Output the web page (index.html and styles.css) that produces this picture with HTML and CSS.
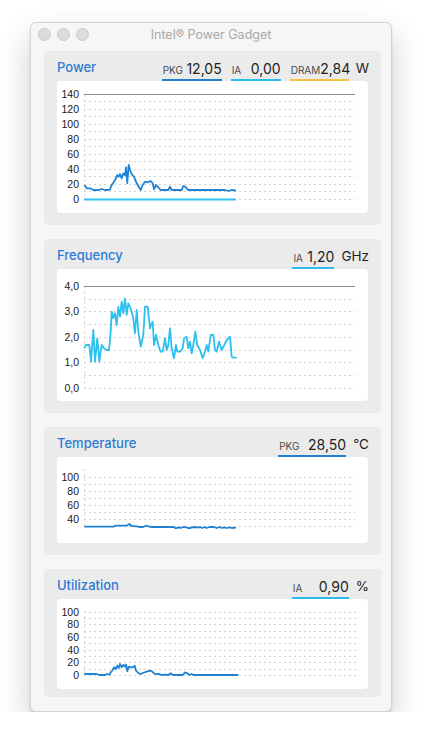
FILE: index.html
```html
<!DOCTYPE html>
<html lang="en">
<head>
    <meta charset="UTF-8">
    <title>Intel® Power Gadget</title>
    <link rel="stylesheet" href="styles.css">
</head>
<body>
<div class="window">
    <div class="titlebar">
        <div class="lights">
            <span class="light"></span>
            <span class="light"></span>
            <span class="light"></span>
        </div>
        <div class="title">Intel® Power Gadget</div>
        <div></div>
    </div>

    <div class="panels">
        <!-- Power -->
        <div class="panel">
            <div class="panel-head">
                <h3>Power</h3>
                <div class="readouts">
                    <div class="readout pkg w-60"><span class="lbl">PKG</span><span class="val">12,05</span></div>
                    <div class="readout ia w-50"><span class="lbl">IA</span><span class="val">0,00</span></div>
                    <div class="readout dram w-59"><span class="lbl">DRAM</span><span class="val">2,84</span></div>
                    <span class="unit">W</span>
                </div>
            </div>
            <div class="chart tall">
                <svg width="311" height="132">
                    <path class="grid" d="M27.5 13.5V118.5 M27 20.5H298 M27 28.5H298 M27 35.5H298 M27 43.5H298 M27 50.5H298 M27 58.5H298 M27 65.5H298 M27 73.5H298 M27 80.5H298 M27 88.5H298 M27 95.5H298 M27 103.5H298 M27 110.5H298 M27 118.5H298"/>
                    <path class="max" d="M27 13.5H298"/>
                    <text x="22" y="17">140</text>
                    <text x="22" y="32">120</text>
                    <text x="22" y="47">100</text>
                    <text x="22" y="62">80</text>
                    <text x="22" y="77">60</text>
                    <text x="22" y="92">40</text>
                    <text x="22" y="107">20</text>
                    <text x="22" y="122">0</text>
                    <polyline class="line ia-line" points="27,118.5 179,118.5"/>
                    <polyline class="line pkg-line" points="27.3,104 29.7,107.3 33,107.3 36.3,109 41.3,109 44.7,108 48,109 51.3,109 53,108.3 54.7,104 57,100.7 59,97.3 60.3,94 61.7,95.7 63,93 64.7,97.3 66.3,92.3 68,94 69,86.3 70.3,102.3 71.7,84 73,89 74.7,93 77,95.7 79.7,102.3 81.7,105.7 83.7,109 85.7,104 88,100.7 90.3,101.3 92,100.7 93.7,100 95.7,102.3 97,108.3 99,104 101.3,106.3 103.7,109 111.3,109 113,105.7 114.7,109 124.7,109 126.3,105 128,105.7 131.3,109 168,109 171.3,110 174.7,109 179,109.7"/>
                </svg>
            </div>
        </div>

        <!-- Frequency -->
        <div class="panel">
            <div class="panel-head">
                <h3>Frequency</h3>
                <div class="readouts">
                    <div class="readout ia w-42"><span class="lbl">IA</span><span class="val">1,20</span></div>
                    <span class="unit">GHz</span>
                </div>
            </div>
            <div class="chart tall">
                <svg width="311" height="132">
                    <path class="grid" d="M27.5 17.5V119.5 M27 30.5H298 M27 42.5H298 M27 55.5H298 M27 68.5H298 M27 81.5H298 M27 93.5H298 M27 106.5H298 M27 119.5H298"/>
                    <path class="max" d="M27 17.5H298"/>
                    <text x="22" y="21">4,0</text>
                    <text x="22" y="46">3,0</text>
                    <text x="22" y="72">2,0</text>
                    <text x="22" y="97">1,0</text>
                    <text x="22" y="123">0,0</text>
                    <polyline class="line ia-line" points="27.3,79.3 29,76 32.3,76 34,92.7 36.3,61 38,92.7 40.3,69.3 42.3,92.7 44.7,76 47,79.3 49.7,81 52,81 53.7,62.7 54.7,42.7 56.3,49.3 58,44.3 59.7,56 61.3,37.7 63,47.7 64.7,32.7 66.3,44.3 68,29.3 69.7,46 71.3,34.3 73,37.7 74.7,42.7 76.3,49.3 78,64.3 79.7,41 81.3,62.7 83.7,77.7 86.3,66 88,37.7 90.7,37.7 93,59.3 94.7,54.3 95.7,52.7 97,76 99,66 101.3,76 103.7,82.7 105.7,82.7 108,69.3 109.7,81 111.3,76 113,59.3 114.7,79.3 117,89.3 119,76 120.3,82.7 123,82.7 125.7,79.3 127,69.3 129.7,67.7 131.3,79.3 133,72.7 134.7,84.3 136.3,76 138.3,62.7 140.3,76 143,81 145.7,89.3 148,82.7 149.7,76 151.3,82.7 153.7,66 156.3,66 158,81 159.7,82.7 162,72.7 164.7,81 167.3,76 169.7,71 173,67.7 174.7,87.7 176.3,88.7 179.7,88.7"/>
                </svg>
            </div>
        </div>

        <!-- Temperature -->
        <div class="panel">
            <div class="panel-head">
                <h3>Temperature</h3>
                <div class="readouts">
                    <div class="readout pkg w-68"><span class="lbl">PKG</span><span class="val">28,50</span></div>
                    <span class="unit">°C</span>
                </div>
            </div>
            <div class="chart short">
                <svg width="311" height="86">
                    <path class="grid" d="M27.5 12V72 M27 20.5H298 M27 27.5H298 M27 34.5H298 M27 41.5H298 M27 48.5H298 M27 55.5H298 M27 62.5H298 M27 69.5H298"/>
                    <text x="22" y="24">100</text>
                    <text x="22" y="38">80</text>
                    <text x="22" y="52">60</text>
                    <text x="22" y="66">40</text>
                    <polyline class="line pkg-line" points="27.3,69.7 56.3,69.7 59,68.7 69.7,68.7 72.3,67 74.7,69 79.7,69.3 83,70 86.3,70 89,68.7 91.3,69.3 94.7,70 116.3,70 118.7,71.3 121.3,70.3 123.7,71 126.3,70 129.7,70.3 132.3,71.3 134.7,70.3 138,70 141.3,70.7 143,70 145.3,71 147.3,70 149.7,71 152.3,70 156.3,70 159.7,71 162.3,70 164.7,71 167,70.3 169.7,71 172.3,70.3 174.7,71 179,70.7"/>
                </svg>
            </div>
        </div>

        <!-- Utilization -->
        <div class="panel">
            <div class="panel-head">
                <h3>Utilization</h3>
                <div class="readouts">
                    <div class="readout ia w-57"><span class="lbl">IA</span><span class="val">0,90</span></div>
                    <span class="unit">%</span>
                </div>
            </div>
            <div class="chart util">
                <svg width="311" height="90">
                    <path class="grid" d="M27.5 12V76.5 M27 13.5H300 M27 19.5H300 M27 25.5H300 M27 32.5H300 M27 38.5H300 M27 44.5H300 M27 51.5H300 M27 57.5H300 M27 63.5H300 M27 70.5H300 M27 76.5H300"/>
                    <text x="22" y="17">100</text>
                    <text x="22" y="29">80</text>
                    <text x="22" y="42">60</text>
                    <text x="22" y="55">40</text>
                    <text x="22" y="67">20</text>
                    <text x="22" y="80">0</text>
                    <polyline class="line pkg-line" points="27.3,75 39.7,75 42.3,76 48,76 49.7,75 52.3,75.7 53.7,73.3 55.7,71 57,68.3 59,70 60.3,66.7 61.7,69 63,65 64.7,68.3 66.3,66 68,67.7 69,65.7 70.3,72.3 71.7,67.7 73.7,68.3 75.7,68.3 77.7,66.7 79,71.7 81.7,74.3 83.7,75 85.7,74 89.7,72.7 93,71.7 95,72.3 97,74.3 99,75 102.3,75 104.7,76 108,75.7 111.3,76 113.7,74.3 115.7,76 125.7,76 128,73.3 130.3,74.3 132.3,76 134.7,75 136.3,76 181.3,76"/>
                </svg>
            </div>
        </div>
    </div>
</div>
</body>
</html>
```

FILE: styles.css
```css
body {
    margin: 0;
    padding: 0;
    background: #fff;
    font-family: Inter, 'Noto Sans', sans-serif;
}

.window {
    box-sizing: border-box;
    width: 362px;
    height: 690px;
    margin: 22px 0 0 30px;
    background: #f6f6f6;
    border: 1px solid #d4d4d4;
    border-radius: 6px;
    box-shadow: 0 14px 32px rgba(0, 0, 0, 0.2), 0 1px 2px rgba(0, 0, 0, 0.15);
}

.titlebar {
    height: 23px;
    display: grid;
    grid-template-columns: 1fr auto 1fr;
    align-items: center;
    padding: 0 7px;
}

.lights {
    display: flex;
    gap: 6px;
}

.light {
    width: 11px;
    height: 11px;
    border-radius: 50%;
    background: #dcdcdc;
    border: 0.5px solid #cbcbcb;
}

.title {
    font-size: 12.5px;
    color: #a9a9a9;
}

.panels {
    display: flex;
    flex-direction: column;
    gap: 14px;
    padding: 5px 10px 0 13px;
}

.panel {
    background: #ebebeb;
    border-radius: 4px;
    padding: 0 13px 12px 13px;
}

.panel:last-child {
    padding-bottom: 8px;
}

.panel-head {
    height: 30px;
    display: flex;
    justify-content: space-between;
    align-items: flex-end;
}

.panel-head h3 {
    align-self: flex-start;
    margin: 8px 0 0 0;
    font-size: 13px;
    font-weight: 500;
    line-height: 16px;
    color: #2b7bd4;
}

.readouts {
    display: flex;
    align-items: flex-end;
    margin-right: -1px;
}

.readout {
    display: flex;
    justify-content: space-between;
    align-items: baseline;
    height: 19px;
    border-bottom: 3px solid;
    margin-left: 9px;
    margin-bottom: -1px;
}

.readout.pkg { border-color: #1f7fd0; }
.readout.ia { border-color: #2cbdee; }
.readout.dram { border-color: #f5c343; }

.w-42 { width: 42px; }
.w-50 { width: 50px; }
.w-57 { width: 57px; }
.w-59 { width: 59px; }
.w-60 { width: 60px; }
.w-68 { width: 68px; }

.lbl {
    font-size: 10px;
    color: #4a4a4a;
    padding-left: 1px;
}

.val {
    font-size: 14px;
    color: #1e1e1e;
}

.unit {
    font-size: 13.5px;
    color: #1e1e1e;
    margin-left: 7px;
    padding-bottom: 5px;
    line-height: 16px;
}

.chart {
    background: #fff;
    border-radius: 4px;
    position: relative;
    z-index: 1;
}

.chart svg {
    display: block;
}

.chart.tall { height: 132px; }
.chart.short { height: 86px; }
.chart.util { height: 90px; }

.chart text {
    font-family: 'Liberation Sans', Arial, sans-serif;
    font-size: 10.5px;
    fill: #1a1a1a;
    text-anchor: end;
}

.grid {
    fill: none;
    stroke: #d2d2d2;
    stroke-width: 1;
    stroke-dasharray: 2 3;
}

.max {
    fill: none;
    stroke: #8d8d8d;
    stroke-width: 1;
}

.line {
    fill: none;
    stroke-width: 1.8;
    stroke-linejoin: round;
}

.pkg-line { stroke: #1f82d3; }
.ia-line { stroke: #2cc0ef; }
```
